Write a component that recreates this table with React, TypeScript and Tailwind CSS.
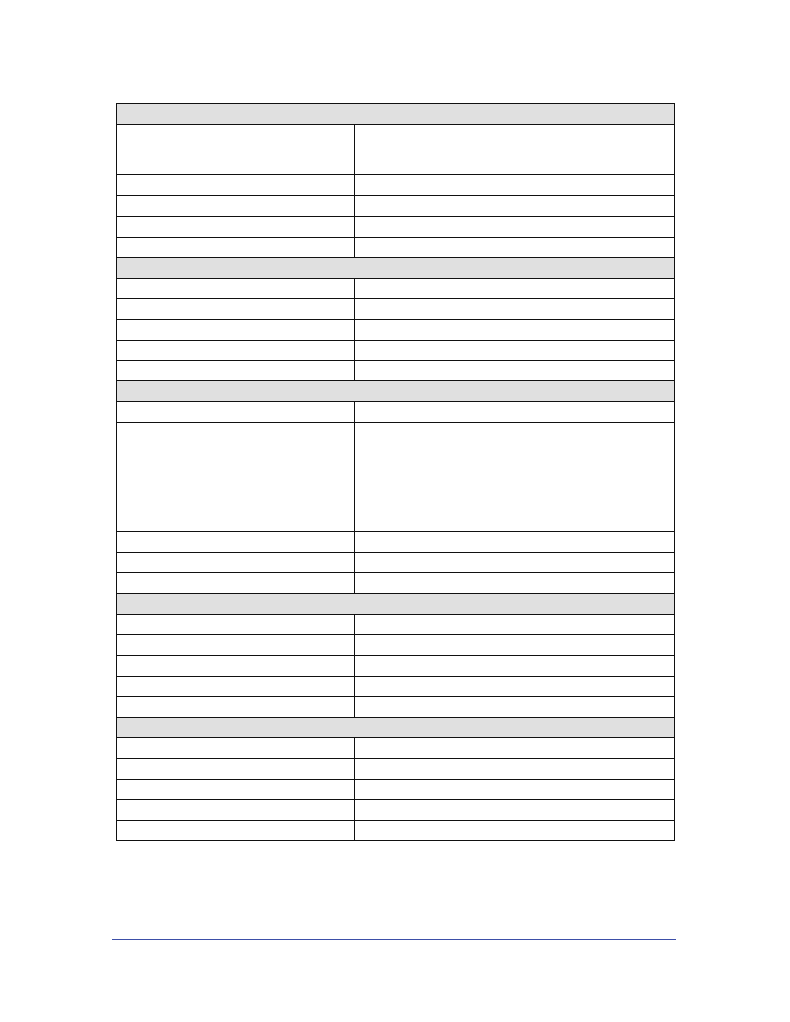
import React from "react";

type Row = { h: number; header?: boolean };

const rows: Row[] = [
  { h: 21, header: true },
  { h: 50 },
  { h: 21 },
  { h: 21 },
  { h: 21 },
  { h: 20 },
  { h: 21, header: true },
  { h: 20 },
  { h: 21 },
  { h: 21 },
  { h: 20 },
  { h: 20 },
  { h: 21, header: true },
  { h: 21 },
  { h: 109 },
  { h: 21 },
  { h: 20 },
  { h: 21 },
  { h: 21, header: true },
  { h: 20 },
  { h: 21 },
  { h: 21 },
  { h: 20 },
  { h: 21 },
  { h: 20, header: true },
  { h: 21 },
  { h: 21 },
  { h: 20 },
  { h: 21 },
  { h: 20 },
];

export default function App() {
  return (
    <div className="min-h-screen w-full bg-white font-['Liberation_Sans',Arial,sans-serif]">
      <div className="pt-[103px] pl-[116px]">
        <div className="w-[559px] border-x border-b border-[#111111]">
          {rows.map((r, i) =>
            r.header ? (
              <div
                key={i}
                className="border-t border-[#111111] bg-[#e0e0e0]"
                style={{ height: r.h }}
              />
            ) : (
              <div
                key={i}
                className="flex border-t border-[#111111] bg-white"
                style={{ height: r.h }}
              >
                <div className="w-[237px] shrink-0" />
                <div className="flex-1 border-l border-[#111111]" />
              </div>
            )
          )}
        </div>
      </div>
      <div className="mt-[98px] ml-[112px] h-px w-[564px] bg-[#3d4fa8]" />
    </div>
  );
}
